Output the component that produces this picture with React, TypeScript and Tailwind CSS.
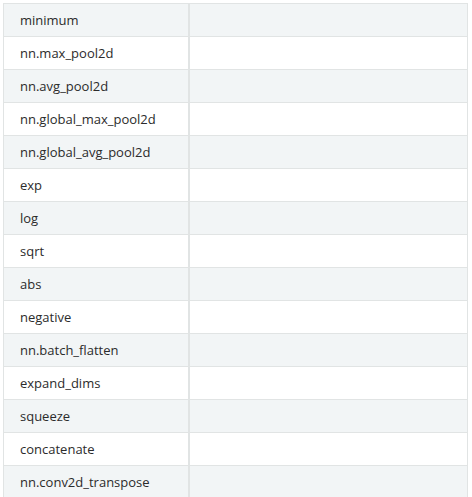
import React from "react";

const rows = [
  "minimum",
  "nn.max_pool2d",
  "nn.avg_pool2d",
  "nn.global_max_pool2d",
  "nn.global_avg_pool2d",
  "exp",
  "log",
  "sqrt",
  "abs",
  "negative",
  "nn.batch_flatten",
  "expand_dims",
  "squeeze",
  "concatenate",
  "nn.conv2d_transpose",
];

export default function App() {
  return (
    <div className="bg-white w-[472px] h-[497px] overflow-hidden pt-[3px] pl-[3px]">
      <table
        className="border-collapse w-[465px] text-[13px] text-[#2b2b2b]"
        style={{ fontFamily: '"Open Sans", "Noto Sans", sans-serif' }}
      >
        <tbody>
          {rows.map((r, i) => (
            <tr key={r} className={i % 2 === 0 ? "bg-[#f2f5f6]" : "bg-white"}>
              <td className="border border-[#e1e4e4] h-[33px] w-[185px] pl-4 align-middle leading-none">
                {r}
              </td>
              <td className="border border-[#e1e4e4] border-l-2 h-[33px]"></td>
            </tr>
          ))}
        </tbody>
      </table>
    </div>
  );
}
